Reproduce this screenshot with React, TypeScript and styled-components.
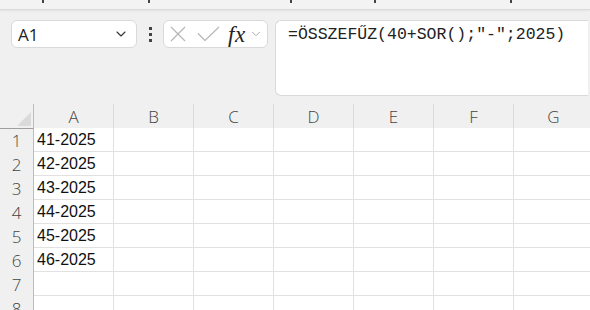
import React from "react";
import styled, { createGlobalStyle } from "styled-components";
import { ChevronDown } from "lucide-react";

const GlobalStyle = createGlobalStyle`
  html, body {
    margin: 0;
    padding: 0;
    background: #f0f0f0;
    overflow: hidden;
  }
  * {
    box-sizing: border-box;
  }
`;

const Page = styled.div`
  width: 590px;
  height: 310px;
  background: #f0f0f0;
  font-family: "Open Sans", "Noto Sans", sans-serif;
  overflow: hidden;
`;

// bottom edge of the ribbon above, only descenders of its labels peek out
const Ribbon = styled.div`
  height: 10px;
  display: flex;
  align-items: flex-start;
  background: #f3f3f3;
  border-bottom: 1px solid #dadada;
  box-shadow: 0 1px 2px rgba(0, 0, 0, 0.06);
`;

const RibbonMark = styled.span<{ $left: number }>`
  margin-left: ${(p) => p.$left}px;
  width: 2px;
  height: 3px;
  background: #444;
`;

const FormulaRow = styled.div`
  display: flex;
  align-items: flex-start;
  padding: 10px 2px 0 11px;
  height: 86px;
`;

const Box = styled.div`
  background: #fff;
  border: 1px solid #d9d9d9;
  border-radius: 6px;
`;

const NameBox = styled(Box)`
  width: 126px;
  height: 28px;
  display: flex;
  align-items: center;
  justify-content: space-between;
  padding: 0 7px 0 6px;
  font-size: 17px;
  color: #222;
`;

const Dots = styled.div`
  width: 26px;
  height: 28px;
  display: flex;
  flex-direction: column;
  align-items: center;
  justify-content: center;
  gap: 3px;
`;

const Dot = styled.span`
  width: 3px;
  height: 3px;
  background: #444;
`;

const Controls = styled(Box)`
  width: 105px;
  height: 28px;
  display: flex;
  align-items: center;
  padding-left: 6px;
  color: #b4b4b4;
`;

const Fx = styled.span`
  font-family: "Liberation Serif", "DejaVu Serif", serif;
  font-style: italic;
  font-size: 23px;
  color: #222;
  margin-left: 8px;
  margin-right: 3px;
  line-height: 1;
  letter-spacing: 0.5px;
`;

const FormulaBox = styled(Box)`
  flex: 1;
  margin-left: 7px;
  height: 76px;
  padding: 4px 0 0 12px;
  font-family: "Liberation Mono", "DejaVu Sans Mono", monospace;
  font-size: 16.5px;
  color: #222;
  border-right: none;
  border-top-right-radius: 0;
  border-bottom-right-radius: 0;
`;

const Grid = styled.div`
  display: grid;
  margin-top: 8px;
  grid-template-columns: 34px repeat(7, 80px);
  grid-auto-rows: 24px;
`;

const Corner = styled.div`
  position: relative;
  height: 25px;
  border-right: 1px solid #bcbcbc;
  border-bottom: 1px solid #9f9f9f;
`;

const Triangle = styled.div`
  position: absolute;
  right: 2px;
  bottom: 2px;
  width: 0;
  height: 0;
  border-left: 14px solid transparent;
  border-bottom: 14px solid #dadada;
`;

const ColHead = styled.div`
  height: 25px;
  display: flex;
  align-items: center;
  justify-content: center;
  font-size: 17px;
  font-weight: 300;
  color: #444;
  border-right: 1px solid #dcdcdc;
  border-bottom: 1px solid #9f9f9f;
`;

const RowHead = styled.div`
  display: flex;
  align-items: center;
  justify-content: center;
  font-size: 17px;
  font-weight: 300;
  color: #444;
  border-right: 1px solid #bcbcbc;
`;

const Cell = styled.div`
  background: #fff;
  border-right: 1px solid #e1e1e1;
  border-bottom: 1px solid #e1e1e1;
  display: flex;
  align-items: center;
  padding-left: 3px;
  font-family: "Liberation Sans", Arial, sans-serif;
  font-size: 16px;
  color: #111;
`;

const CancelIcon = () => (
  <svg width="16" height="16" viewBox="0 0 16 16" fill="none" stroke="#b4b4b4" strokeWidth="1.1">
    <path d="M1 1 L15 15 M15 1 L1 15" />
  </svg>
);

const EnterIcon = () => (
  <svg width="23" height="16" viewBox="0 0 23 16" fill="none" stroke="#b4b4b4" strokeWidth="1.1" style={{ marginLeft: 11 }}>
    <path d="M1 7.5 L8 14.5 L22 1" />
  </svg>
);

const cols = ["A", "B", "C", "D", "E", "F", "G"];
const rows = [1, 2, 3, 4, 5, 6, 7, 8];

export default function App() {
  return (
    <Page>
      <GlobalStyle />
      <Ribbon>
        <RibbonMark $left={42} />
        <RibbonMark $left={104} />
        <RibbonMark $left={140} />
        <RibbonMark $left={82} />
        <RibbonMark $left={134} />
      </Ribbon>
      <FormulaRow>
        <NameBox>
          <span>A1</span>
          <ChevronDown size={16} strokeWidth={1.6} color="#333" />
        </NameBox>
        <Dots>
          <Dot />
          <Dot />
          <Dot />
        </Dots>
        <Controls>
          <CancelIcon />
          <EnterIcon />
          <Fx>fx</Fx>
          <ChevronDown size={14} strokeWidth={1.4} color="#999" />
        </Controls>
        <FormulaBox>=ÖSSZEFŰZ(40+SOR();"-";2025)</FormulaBox>
      </FormulaRow>
      <Grid>
        <Corner>
          <Triangle />
        </Corner>
        {cols.map((c) => (
          <ColHead key={c}>{c}</ColHead>
        ))}
        {rows.map((r) => (
          <React.Fragment key={r}>
            <RowHead>{r}</RowHead>
            {cols.map((c) => (
              <Cell key={c}>{c === "A" && r <= 6 ? `${40 + r}-2025` : ""}</Cell>
            ))}
          </React.Fragment>
        ))}
      </Grid>
    </Page>
  );
}
